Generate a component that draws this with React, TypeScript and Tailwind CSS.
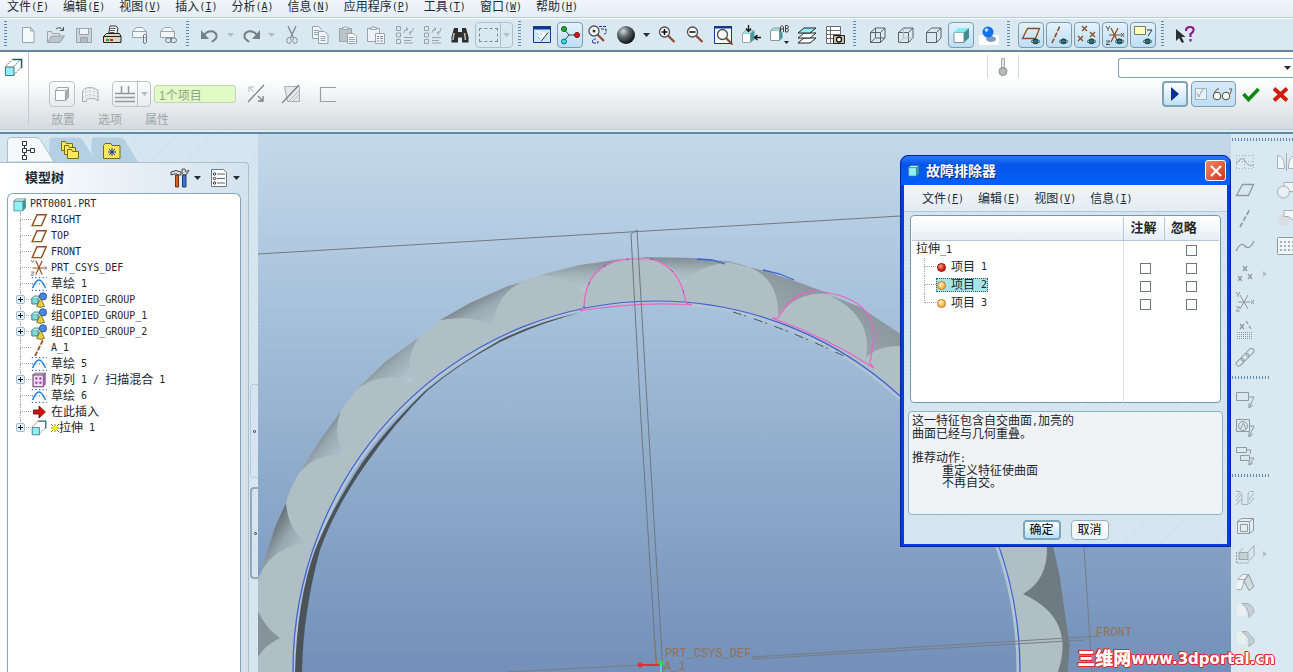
import { useState, type ReactNode } from 'react'

const HATCH =
  'bg-[#d9e7f0] bg-[repeating-linear-gradient(135deg,transparent_0,transparent_2px,rgba(160,195,215,0.16)_2px,rgba(160,195,215,0.16)_3px)]'

const MONO = "font-['DejaVu_Sans_Mono','Noto_Sans_CJK_SC',monospace]"

// CJK glyphs are 12px wide, Latin ones half of that
function Label({ text }: { text: string }) {
  const parts = text.split(/([\x20-\x7e]+)/).filter(Boolean)
  return (
    <>
      {parts.map((part, i) =>
        /^[\x20-\x7e]/.test(part) ? (
          <span key={i} className={`text-[10px] whitespace-pre ${MONO}`}>
            {part}
          </span>
        ) : (
          <span key={i}>{part}</span>
        )
      )}
    </>
  )
}

function Icon({ children, size = 20 }: { children: ReactNode; size?: number }) {
  return (
    <svg width={size} height={size} viewBox="0 0 20 20" fill="none" strokeWidth="1" aria-hidden="true" className="shrink-0">
      {children}
    </svg>
  )
}

function Arrow({ faded = false }: { faded?: boolean }) {
  return (
    <svg width="7" height="4" viewBox="0 0 7 4" aria-hidden="true">
      <path d="M0 0h7L3.5 4z" fill={faded ? '#b3bec5' : '#222c33'} />
    </svg>
  )
}

const G = '#9aa5ab'

const eye = (
  <g>
    <path d="M10 16.500q4.500-5 9 0q-4.500 4.500-9 0z" fill="#e8f4f8" stroke="#3b4448" />
    <circle cx="14.500" cy="16.300" r="2.200" fill="#1c7f7c" stroke="#16373b" />
  </g>
)

const lens = (cx: number, cy: number) => (
  <g>
    <path d={`M${cx + 3} ${cy + 3}l7 7`} stroke="#8c4a2b" strokeWidth="2.200" />
    <circle cx={cx} cy={cy} r="5" fill="#fafcfc" stroke="#4b4f52" strokeWidth="1.300" />
  </g>
)

const cubeBack = (
  <path d="M3.500 7.500h10v10h-10zM3.500 7.500l5-4.500h9.500l-4.500 4.500M18 3v10l-4.500 4.500" stroke="#5d6266" />
)

const clipboard = (
  <>
    <path d="M1.500 3.500h12v13h-12z" fill="#b9c3c8" stroke={G} />
    <path d="M4.500 4.500v-2h2l1-1.500 1 1.500h2v2z" fill="#e8eef2" stroke={G} />
  </>
)

const regen = (
  <path
    d="M2.500 1.500h4v4h-4zM2.500 8h4v4h-4zM2.500 14.500h4v4h-4zM10 8q0-4 4-4l-2-2m2 2l-2 2M19 3q0 5-4 5l2-2m-2 2l2 2M10 12.500h9M10 15.500h7M10 18h9"
    stroke={G}
    fill="none"
  />
)

const icons: Record<string, ReactNode> = {
  new: <path d="M4.500 2.500h8l3.500 3.500v11.500h-11.500zM12.500 2.500v3.500h3.500" fill="#f5f9fb" stroke={G} />,
  open: (
    <>
      <path d="M1.500 17.500v-11h4l1 2h7v3" fill="#dfe6ea" stroke={G} />
      <path d="M1.500 17.500l4-6.500h13l-4.500 6.500z" fill="#bcc5ca" stroke={G} />
      <path d="M10 4q4-3 7 1m.5-3v3.500h-3.500" stroke="#4d565b" />
    </>
  ),
  save: (
    <>
      <path d="M2.500 3.500h15v14h-15z" fill="#cdd5d9" stroke={G} />
      <path d="M5.500 3.500h9v6h-9z" fill="#eef3f6" stroke={G} />
      <path d="M6.500 12.500h7v5h-7z" fill="#b1bbc0" stroke={G} />
    </>
  ),
  print: (
    <>
      <path d="M6.500 10l1.500-9h6l2 2-1.500 7z" fill="#fff" stroke="#333" />
      <path d="M8.500 3.500h5M8 5.500h5M7.500 7.500h5" stroke="#555" />
      <path d="M1.500 11.500l3-3h13l1.500 3v6h-17.500z" fill="#e0d6be" stroke="#222" />
      <path d="M1.500 11.500h17.500" stroke="#222" />
      <path d="M4 14h3v2h-3z" fill="#18a02c" />
      <path d="M8 14h3v2h-3z" fill="#d32020" />
    </>
  ),
  mailclip: (
    <>
      <path d="M2.500 6.500l4-4h6l4 4v6h-14z" fill="#f1f6f8" stroke={G} />
      <path d="M2.500 6.500h14" stroke={G} />
      <path d="M13.500 16v-6q1.500-2 3 0v7q-1.500 3-3 1v-6" stroke="#6f7a80" />
    </>
  ),
  maillink: (
    <>
      <path d="M2.500 6.500l4-4h6l4 4v6h-14z" fill="#f1f6f8" stroke={G} />
      <path d="M2.500 6.500h14" stroke={G} />
      <rect x="7.500" y="13" width="6" height="4.500" rx="2.200" stroke="#6f7a80" />
      <rect x="12.500" y="13" width="6" height="4.500" rx="2.200" stroke="#6f7a80" />
    </>
  ),
  undo: (
    <>
      <path d="M4 10q4-5 9-3.500q5 2 3 7l-4 3.500" stroke="#747f86" strokeWidth="2" />
      <path d="M1 5v9h8z" fill="#747f86" />
    </>
  ),
  redo: (
    <>
      <path d="M16 10q-4-5-9-3.500q-5 2-3 7l4 3.500" stroke="#747f86" strokeWidth="2" />
      <path d="M19 5v9h-8z" fill="#747f86" />
    </>
  ),
  cut: (
    <>
      <path d="M6 1l5.500 12M14 1l-5.500 12" stroke="#87939a" strokeWidth="1.500" />
      <ellipse cx="7" cy="15.500" rx="2.200" ry="3" stroke="#87939a" />
      <ellipse cx="13" cy="15.500" rx="2.200" ry="3" stroke="#87939a" />
    </>
  ),
  copy: (
    <>
      <path d="M2.500 1.500h6l3 3v9h-9zM4 5.500h5M4 7.500h5M4 9.500h5" fill="#eef4f7" stroke={G} />
      <path d="M8.500 6.500h6l3.500 3v9h-9.500zM10.500 11.500h5M10.500 13.500h5M10.500 15.500h5" fill="#eef4f7" stroke={G} />
    </>
  ),
  paste: (
    <>
      {clipboard}
      <path d="M9.500 8.500h6l3 3v7h-9zM11 12.500h5M11 14.500h6M11 16.500h6" fill="#f5f9fb" stroke={G} />
    </>
  ),
  pastespecial: (
    <>
      <path d="M1.500 3.500h12v13h-12z" fill="#edf3f6" stroke={G} />
      <path d="M4.500 4.500v-2h2l1-1.500 1 1.500h2v2z" fill="#e8eef2" stroke={G} />
      <path d="M9.500 8.500h9v10h-9z" fill="#f5f9fb" stroke={G} />
      <path d="M11 11.500h2M14 11.500h3M11 13.500h2M14 13.500h3M11 16h2M14 16h3" stroke="#7d888e" />
    </>
  ),
  regen,
  regenall: regen,
  find: (
    <>
      <path d="M4 3h4v4h4v-4h4l2.500 9v5.500h-6.500v-5h-4v5h-6.500v-5.500z" fill="#2e2e2e" />
      <path d="M4 8l-1 7M14.500 8l1 7" stroke="#b9b9b0" strokeWidth="1.600" />
    </>
  ),
  repaint: (
    <>
      <path d="M1.500 1.500h17v16h-17z" fill="#cfe6f8" stroke="#113a8c" />
      <path d="M1 1h18v3.500h-18z" fill="#113a8c" />
      <path d="M4 6l12 2-7 9z" fill="#f8fcff" />
      <path d="M5 8l3 3M8 8l3 3M6 12l2 2" stroke="#49b0d8" strokeDasharray="1 1" />
      <path d="M16 7.500l-7 9" stroke="#333" />
    </>
  ),
  spin: (
    <>
      <path d="M4 4l5 6M9 10l-5 6M9 10h8" stroke="#38444b" />
      <circle cx="4" cy="4" r="2.500" fill="#1fae2c" stroke="#0b5c14" />
      <circle cx="17" cy="10" r="2.500" fill="#e01818" stroke="#750909" />
      <circle cx="4" cy="16.500" r="2.500" fill="#35dbe0" stroke="#0a7479" />
    </>
  ),
  orient: (
    <>
      {lens(6, 6)}
      <circle cx="6" cy="6" r="1.500" fill="#333" />
      <path d="M11 1.500h7M13 4h5v3M16 9q3 0 2-3M5 18q-2-4 3-4M5 18h5v-3" stroke="#1d2f9c" strokeDasharray="3 1" />
    </>
  ),
  shade: (
    <>
      <defs>
        <radialGradient id="sphere" cx="35%" cy="30%" r="70%">
          <stop offset="0" stopColor="#d9dde0" />
          <stop offset="0.4" stopColor="#6b7277" />
          <stop offset="1" stopColor="#0f1214" />
        </radialGradient>
      </defs>
      <circle cx="10" cy="10" r="9" fill="url(#sphere)" />
    </>
  ),
  zoomin: (
    <>
      {lens(7.500, 7)}
      <path d="M4.500 7h6M7.500 4v6" stroke="#111" strokeWidth="1.600" />
    </>
  ),
  zoomout: (
    <>
      {lens(7.500, 7)}
      <path d="M4.500 7h6" stroke="#111" strokeWidth="1.600" />
    </>
  ),
  refit: (
    <>
      <path d="M1.500 1.500h17v17h-17z" fill="#f4fafd" stroke="#113a8c" />
      <path d="M1 1h18v2.500h-18z" fill="#113a8c" />
      {lens(9.500, 9.500)}
    </>
  ),
  view: (
    <>
      <path d="M1.500 8.500h8v9h-8z" fill="#fff" stroke="#9aa5ab" />
      <path d="M1.500 8.500l3-3h8l-3 3" fill="#9deaf0" stroke="#9aa5ab" />
      <path d="M9.500 8.500l4-3v9l-4 3z" fill="#4b9c9c" />
      <path d="M7.500 0v6m-2.500-2.500l2.500 3 2.500-3M20 12.500h-6m2.500-2.500l-3 2.500 3 2.500" stroke="#111" strokeWidth="1.300" />
    </>
  ),
  saved: (
    <>
      <path d="M1.500 5.500h9v10h-9z" fill="#fff" stroke="#8a959b" />
      <path d="M1.500 5.500l3-2.500h6v2.500" fill="#9deaf0" stroke="#8a959b" />
      <path d="M10.500 6l3 1v6l-3 2.500z" fill="#4b9c9c" />
      <path d="M11.500 7v-5l1.500-1.500 1.500 1.500v5m-3-3h3M16.500 7v-6.500h2l1 1.500-1 1.500h-2m2 0l1 1.500-1 2h-2" stroke="#444" />
      <path d="M15 16h5l-2.500 3z" fill="#222" />
    </>
  ),
  layers: (
    <>
      <path d="M1 18l6-5h12l-6 5z" fill="#fff" stroke="#222" />
      <path d="M1 13l6-5h12l-6 5z" fill="#fff" stroke="#222" />
      <path d="M1 8l6-5h12l-6 5z" fill="#8ff0f5" stroke="#222" />
    </>
  ),
  viewmgr: (
    <>
      <path d="M1.500 1.500h14v17h-14zM5.500 1.500v17M1.500 5.500h14M1.500 9.500h14M1.500 13.500h14" fill="#fff" stroke="#6c6c6c" />
      <path d="M8.500 10.500h11v8h-11z" fill="#c7c0a6" stroke="#222" />
      <circle cx="14" cy="14.500" r="2.500" fill="#fff" stroke="#111" strokeWidth="1.300" />
    </>
  ),
  wire: (
    <>
      {cubeBack}
      <path d="M8.500 3v10h9.500M8.500 13l-5 4.500" stroke="#5d6266" />
    </>
  ),
  hidden: (
    <>
      {cubeBack}
      <path d="M8.500 3v10h9.500M8.500 13l-5 4.500" stroke="#b3bbc0" />
    </>
  ),
  nohidden: cubeBack,
  shaded: (
    <>
      <path d="M3 7.500h10v10h-10z" fill="#fff" stroke="#7d8b92" />
      <path d="M3 7.500l4-4.500h11l-5 4.500z" fill="#7eeef4" />
      <path d="M13 7.500l5-4.500v10l-5 4.500z" fill="#3f8f92" />
    </>
  ),
  realtime: (
    <>
      <path d="M0 10h20v10h-20z" fill="#fff" />
      <ellipse cx="12" cy="14" rx="5" ry="3" fill="#7b9bc6" />
      <circle cx="9" cy="7" r="5.500" fill="#1273ee" />
      <circle cx="7.500" cy="5" r="1.800" fill="#bfe0ff" />
    </>
  ),
  dplane: (
    <>
      <path d="M1.500 13.500l5-10h12l-4 10z" stroke="#8b4c24" strokeWidth="1.300" />
      {eye}
    </>
  ),
  daxis: (
    <>
      <path d="M3 18l8-17" stroke="#8b4c24" strokeWidth="1.600" strokeDasharray="5 1.500" />
      {eye}
    </>
  ),
  dpoint: (
    <>
      <path d="M5 1l5 5M10 1l-5 5M13 7l5 5M18 7l-5 5M1 11l5 5M6 11l-5 5" stroke="#8b4c24" strokeWidth="1.300" />
      {eye}
    </>
  ),
  dcsys: (
    <>
      <path d="M4 10h12M6 3l7 14M13 3l-7 14" stroke="#8b4c24" strokeWidth="1.200" />
      <path d="M1 1l2 3 2-3M3 4v2M1 16h4l-4 3.500h4M16 8l3 4M19 8l-3 4" stroke="#555" />
      {eye}
    </>
  ),
  dannot: (
    <>
      <path d="M1.500 1.500h11v8h-11z" fill="#ffffb8" stroke="#777" />
      <path d="M14 5h5l-4 6" stroke="#333" />
      {eye}
    </>
  ),
  help: (
    <>
      <path d="M1 4v12l3-3 3 5 2-1-2.500-5h4z" fill="#2b2f33" />
      <path d="M11 6q0-4 4-4q4 0 3.500 3.500q-.5 2-3 3.500v3M15.500 14v2.500" stroke="#8a1a88" strokeWidth="2.200" />
    </>
  ),
}

const sideIcons: Record<string, ReactNode> = {
  sketch: (
    <>
      <path d="M1 3.500h18M1 9.500h18M1 16.500h18M1.500 3v14M9.500 3v14M18.500 3v14" stroke="#aab4b9" strokeDasharray="1 2" />
      <path d="M1 12q6-9 9-3t9 4" stroke="#9aa5ab" />
    </>
  ),
  plane: <path d="M1.500 15.500l6-11h11l-5 11z" stroke="#8f9a9f" strokeWidth="1.300" />,
  axis: <path d="M5 19l10-18" stroke="#8f9a9f" strokeWidth="1.600" strokeDasharray="5 2" />,
  curve: <path d="M1 15q5-10 9-5t9-5" stroke="#8f9a9f" strokeWidth="1.300" />,
  points: <path d="M8 2l4 5M12 2l-4 5M3 12l4 5M7 12l-4 5M13 10l4 5M17 10l-4 5" stroke="#8f9a9f" strokeWidth="1.300" />,
  csys: <path d="M3 10h12M5 3l8 14M13 3l-8 14M1 0l2 3 2-3M3 3v2M1 15h4l-4 4h4M16 8l3 4M19 8l-3 4" stroke="#8f9a9f" />,
  field: (
    <>
      <path d="M5 4l4 5M9 4l-4 5M11 1l2 3M14 6l2 3" stroke="#8f9a9f" strokeWidth="1.300" />
      <path d="M2 12.500h16M2 14.500h16M2 16.500h16M2 18.500h16" stroke="#8f9a9f" strokeDasharray="1 1" />
    </>
  ),
  chain: (
    <g transform="rotate(-45 10 10)" stroke="#8f9a9f">
      <rect x="-1" y="7" width="9" height="5" rx="2.500" />
      <rect x="6" y="7" width="9" height="5" rx="2.500" />
      <rect x="13" y="7" width="9" height="5" rx="2.500" />
    </g>
  ),
  note: <path d="M1.500 2.500h12v8h-12zM14 7h5l-5 11m0-5v5l4-3" stroke="#8f9a9f" />,
  notesym: (
    <>
      <path d="M1.500 1.500h13v12h-13zM15 8h4l-5 11m0-5v5l4-3" stroke="#8f9a9f" />
      <circle cx="8" cy="8" r="4.500" stroke="#8f9a9f" />
      <path d="M5.500 11l3-6 2.500 6" stroke="#8f9a9f" />
    </>
  ),
  notes: <path d="M1.500 1.500h10v5h-10zM5.500 9.500h9v5h-9zM12 4h4l-1 4M15 12h4l-5 7m0-4v4l4-2" stroke="#8f9a9f" />,
  hole: <path d="M1 3.500h4q2 1 2 4v9h6v-9q0-3 2-4h4M1 9l4-4M1 13l5-6M1 17l5-6M14 12l5-7M14 16l5-6" stroke="#a6b0b5" />,
  shell: (
    <path d="M2.500 5.500h12v12h-12zM2.500 5.500l4-3h12v12l-4 3M14.500 5.500l4-3M5.500 8.500h7v7h-7z" fill="#e6edf0" stroke="#8f9a9f" />
  ),
  rib: (
    <>
      <path d="M4 8.500h9v7h-9z" fill="#c6cfd3" stroke="#9aa5ab" />
      <path d="M4 8.500l4-4M13 8.500l6-7v10l-6 6" stroke="#a6b0b5" />
      <path d="M1.500 8v11h12" stroke="#8f9a9f" strokeDasharray="2 1" />
    </>
  ),
  draft: (
    <>
      <path d="M2.500 7.500l5-5h6l-4 5zM2.500 7.500h7l-3 10h-5" fill="#eef3f5" stroke="#a6b0b5" />
      <path d="M13.500 2.500l5.500 12-5 4-5-9z" fill="#d3dade" stroke="#8f9a9f" />
    </>
  ),
  round: (
    <>
      <path d="M2 4h9v12h-9z" fill="#e9eeef" />
      <path d="M7 3.500h5q7 2 7 9l-5 5q0-9-7-14z" fill="#c8d0d4" stroke="#a6b0b5" />
    </>
  ),
  chamfer: (
    <>
      <path d="M2 4h9v12h-9z" fill="#e9eeef" />
      <path d="M7 3.500h5l7 8v3l-5 4v-8z" fill="#c8d0d4" stroke="#a6b0b5" />
    </>
  ),
  merge: <path d="M4 15l6-4h9v6h-10z" stroke="#8f9a9f" />,
  mirror: <path d="M1.500 3.500q7 0 7 13h-7zM10.500 1v18M19.500 3.500q-7 0-7 13h7z" fill="#f3f7f9" stroke="#a6b0b5" />,
  union: (
    <>
      <path d="M8 2.500h12v9h-12z" fill="#eef3f5" stroke="#a6b0b5" />
      <circle cx="7.500" cy="12" r="6" fill="#e9eff2" stroke="#a6b0b5" />
    </>
  ),
  trim: (
    <>
      <circle cx="7.500" cy="12" r="6" fill="#d9dee2" />
      <path d="M8 2.500h12v12l-8-6h-4z" fill="#f4f8fa" stroke="#a6b0b5" />
    </>
  ),
  pattern: (
    <>
      <rect x="1.500" y="1.500" width="20" height="17" rx="1" fill="#f0f5f7" stroke="#8f9a9f" />
      <path d="M4 6h15M4 10h15M4 14h15" stroke="#a6b0b5" strokeWidth="2" strokeDasharray="2 2" />
    </>
  ),
}

type Tool = { id: string; label: string; on?: boolean }

const fileTools: Tool[] = [
  { id: 'new', label: '新建' },
  { id: 'open', label: '打开' },
  { id: 'save', label: '保存' },
  { id: 'print', label: '打印' },
  { id: 'mailclip', label: '发送附件' },
  { id: 'maillink', label: '发送链接' },
]
const editTools: Tool[] = [
  { id: 'cut', label: '剪切' },
  { id: 'copy', label: '复制' },
  { id: 'paste', label: '粘贴' },
  { id: 'pastespecial', label: '选择性粘贴' },
  { id: 'regen', label: '再生' },
  { id: 'regenall', label: '再生管理器' },
  { id: 'find', label: '查找' },
]
const viewTools: Tool[] = [
  { id: 'repaint', label: '重画' },
  { id: 'spin', label: '旋转中心', on: true },
  { id: 'orient', label: '定向模式' },
  { id: 'shade', label: '外观库' },
]
const zoomTools: Tool[] = [
  { id: 'zoomin', label: '放大' },
  { id: 'zoomout', label: '缩小' },
  { id: 'refit', label: '重新调整' },
  { id: 'view', label: '重定向' },
  { id: 'saved', label: '已命名视图' },
  { id: 'layers', label: '层' },
  { id: 'viewmgr', label: '视图管理器' },
]
const displayTools: Tool[] = [
  { id: 'wire', label: '线框' },
  { id: 'hidden', label: '隐藏线' },
  { id: 'nohidden', label: '无隐藏线' },
  { id: 'shaded', label: '着色', on: true },
  { id: 'realtime', label: '增强的真实感' },
]
const datumTools: Tool[] = [
  { id: 'dplane', label: '平面显示', on: true },
  { id: 'daxis', label: '轴显示', on: true },
  { id: 'dpoint', label: '点显示', on: true },
  { id: 'dcsys', label: '坐标系显示', on: true },
  { id: 'dannot', label: '注释显示', on: true },
]

function ToolGroup({ tools }: { tools: Tool[] }) {
  return (
    <>
      {tools.map((t) => (
        <button
          key={t.id}
          aria-label={t.label}
          className={
            t.on
              ? 'w-[26px] h-[26px] mx-px shrink-0 flex items-center justify-center rounded-sm border border-[#7f9cae] bg-gradient-to-b from-[#e4f2fb] to-[#bcdff6]'
              : 'w-[26px] h-[26px] mx-px shrink-0 flex items-center justify-center'
          }
        >
          <Icon>{icons[t.id]}</Icon>
        </button>
      ))}
    </>
  )
}

function Grip() {
  return (
    <span className="w-[3px] h-[27px] ml-1 mr-[7px] shrink-0 bg-[repeating-linear-gradient(180deg,#5c8ab0_0,#5c8ab0_1px,transparent_1px,transparent_3px)]" />
  )
}

function Drop({ faded = false, label }: { faded?: boolean; label: string }) {
  return (
    <button aria-label={label} className="w-[13px] h-[26px] shrink-0 flex items-center justify-center">
      <Arrow faded={faded} />
    </button>
  )
}

function MenuItem({ text, hotkey }: { text: string; hotkey: string }) {
  return (
    <button className="flex items-center text-xs leading-[14px] text-[#1c2a33] whitespace-nowrap">
      {text}
      <span className={`text-[10px] ${MONO}`}>
        (<span className="underline">{hotkey}</span>)
      </span>
    </button>
  )
}

const mainMenu = [
  ['文件', 'F'],
  ['编辑', 'E'],
  ['视图', 'V'],
  ['插入', 'I'],
  ['分析', 'A'],
  ['信息', 'N'],
  ['应用程序', 'P'],
  ['工具', 'T'],
  ['窗口', 'W'],
  ['帮助', 'H'],
]

function Toolbar() {
  return (
    <div className="h-[34px] flex items-center border-t border-white border-b-2 border-b-[#5f8aa2] bg-[#dae8f1] overflow-hidden">
      <Grip />
      <ToolGroup tools={fileTools} />
      <Grip />
      <ToolGroup tools={[{ id: 'undo', label: '撤消' }]} />
      <Drop faded label="撤消列表" />
      <ToolGroup tools={[{ id: 'redo', label: '重做' }]} />
      <Drop faded label="重做列表" />
      <ToolGroup tools={editTools} />
      <div className="w-[38px] h-[26px] mx-px shrink-0 flex rounded-sm border border-[#b2c0c9]">
        <button aria-label="选择" className="flex-1 flex items-center justify-center border-r border-[#b2c0c9]">
          <span className="w-[19px] h-[14px] border border-dashed border-[#7c8a92]" />
        </button>
        <button aria-label="选择列表" className="w-[11px] flex items-center justify-center">
          <Arrow faded />
        </button>
      </div>
      <Grip />
      <ToolGroup tools={viewTools} />
      <Drop label="外观列表" />
      <ToolGroup tools={zoomTools} />
      <Grip />
      <ToolGroup tools={displayTools} />
      <Grip />
      <ToolGroup tools={datumTools} />
      <Grip />
      <ToolGroup tools={[{ id: 'help', label: '上下文帮助' }]} />
    </div>
  )
}

function ExtrudeIcon({ size = 18 }: { size?: number }) {
  return (
    <Icon size={size}>
      <path d="M1.500 9l7-7.500M10 18l8-8M10 9l8-7.500" stroke="#555" strokeDasharray="2 1" />
      <path d="M9 1.500h9.500v9" stroke="#1c5f5f" strokeWidth="1.600" />
      <path d="M1.500 9.500h9v9h-9z" fill="#8df1f5" stroke="#3b6a78" />
    </Icon>
  )
}

function Dashboard() {
  const tools = (
    <div className="flex items-center h-[26px]">
      <button
        aria-label="实体"
        className="w-[26px] h-[26px] flex items-center justify-center rounded-sm border border-[#bcc3c6]"
      >
        <Icon>
          <path d="M3.500 6.500h10v10h-10z" fill="#fdfdfd" stroke="#9ea5a8" />
          <path d="M3.500 6.500l2-3h11v10l-3 3" stroke="#9ea5a8" />
          <path d="M14 6.500l2-2v9l-2 2.500z" fill="#a7adb0" />
        </Icon>
      </button>
      <button aria-label="曲面" className="w-[30px] flex items-center justify-center">
        <Icon>
          <path d="M2.500 17.500v-9q1-5 7-5t8.500 3v10.500q-2-3-7.500-2.500t-4 3z" stroke="#a3aaad" />
          <path d="M6 5v10M10 4v10M14 5v10M3 9q7-4 15 0M3 13q7-4 15 0" stroke="#b9bfc2" strokeDasharray="1 1" />
        </Icon>
      </button>
      <div className="w-[39px] h-[26px] ml-[7px] flex rounded-sm border border-[#bcc3c6]">
        <button aria-label="深度" className="flex-1 flex items-center justify-center border-r border-[#bcc3c6]">
          <Icon>
            <path d="M0 9.500h20M0 13.500h20M0 17.500h20M6.500 2v7.500M13.500 2v7.500" stroke="#92999d" strokeWidth="1.500" />
          </Icon>
        </button>
        <button aria-label="深度列表" className="w-3 flex items-center justify-center">
          <Arrow faded />
        </button>
      </div>
      <input
        aria-label="参照"
        defaultValue="1个项目"
        className="w-[82px] h-[18px] ml-[3px] px-1 rounded-[3px] border border-[#c6d3bb] bg-[#e0fbc4] text-xs text-[#94a08a]"
      />
      <button aria-label="反向" className="ml-[10px]">
        <Icon>
          <path d="M2 18l16-17" stroke="#7d8487" strokeWidth="1.300" />
          <path d="M3 8v-5h5M3 3l5 5" stroke="#b0b7ba" />
          <path d="M17 12v5h-5M17 17l-5-5" stroke="#7d8487" strokeWidth="1.400" />
        </Icon>
      </button>
      <button aria-label="去除材料" className="ml-[15px]">
        <Icon>
          <path d="M3.500 2.500h15v15h-12z" fill="#e3e8ea" stroke="#a8afb2" />
          <path d="M8 17l10-10M12 17l6-6M8 12l8-9" stroke="#b3babd" />
          <path d="M1 19l17-18" stroke="#7d8487" strokeWidth="1.300" />
        </Icon>
      </button>
      <button aria-label="加厚草绘" className="ml-[17px]">
        <Icon>
          <path d="M18 3.500h-15.500v14h15.500" stroke="#979ea1" strokeWidth="1.200" />
        </Icon>
      </button>
    </div>
  )

  return (
    <section className="h-[82px] flex flex-col border-b-2 border-[#5f8aa2]">
      <div className="flex-1 flex justify-between bg-gradient-to-b from-white from-35% to-[#d4dbde]">
        <div className="flex">
          <div className="w-[29px] pl-1 pt-[6px] mb-1 border-r border-[#c3ccd1]">
            <ExtrudeIcon size={19} />
          </div>
          <div className="pl-5 pt-[29px]">
            {tools}
            <div className="flex gap-[23px] pt-[5px] pl-[2px] text-xs leading-[16px] text-[#9fa7ab]">
              <button>放置</button>
              <button>选项</button>
              <button>属性</button>
            </div>
          </div>
        </div>
        <div className="flex flex-col items-end">
          <div className="flex items-start pt-[3px]">
            <div className="w-8 h-[23px] mr-[99px] flex items-center justify-center border-x border-[#d5dadc]">
              <Icon>
                <path d="M8.500 1.500h3v10h-3z" fill="#e2e2e2" stroke="#a9adaf" />
                <circle cx="10" cy="14.500" r="4" fill="#b9b9b9" stroke="#8a8d8f" />
              </Icon>
            </div>
            <div className="relative mt-[3px]">
              <select
                aria-label="选择过滤器"
                className="appearance-none block w-[175px] h-5 rounded-l-[3px] border border-r-0 border-[#7fa3b6] bg-white text-xs"
              >
                <option value=""></option>
              </select>
              <span className="pointer-events-none absolute inset-y-0 right-[2px] flex items-center">
                <Arrow />
              </span>
            </div>
          </div>
          <div className="flex items-center pt-[3px] pr-1">
            <button
              aria-label="继续"
              className="w-[26px] h-[26px] flex items-center justify-center rounded-sm border-2 border-[#7fa3b6] bg-gradient-to-b from-white to-[#bfe0f6]"
            >
              <svg width="9" height="14" viewBox="0 0 9 14" aria-hidden="true">
                <path d="M0 0l8 7-8 7z" fill="#0c2f94" />
              </svg>
            </button>
            <label className="w-[45px] h-[26px] ml-[3px] flex items-center justify-center gap-[5px] rounded-sm border border-[#7f9cae] bg-gradient-to-b from-[#d5e9f7] to-[#bddff6]">
              <input
                type="checkbox"
                aria-label="预览"
                defaultChecked
                className="appearance-none w-3 h-3 border border-[#a3b2bb] bg-[#eaf2f8] relative checked:after:content-['✓'] after:absolute after:left-px after:-top-[3px] after:text-[11px] after:leading-[14px] after:text-[#8a979f]"
              />
              <svg width="21" height="14" viewBox="0 0 21 14" fill="none" aria-hidden="true">
                <circle cx="5" cy="9" r="3.800" fill="#fbfbf2" stroke="#4b4b45" />
                <circle cx="14" cy="9" r="3.800" fill="#fbfbf2" stroke="#4b4b45" />
                <path d="M2 6l3-4h2M18 7l2-5h-3" stroke="#7a5446" />
              </svg>
            </label>
            <button aria-label="应用" className="ml-[6px]">
              <svg width="18" height="16" viewBox="0 0 18 16" fill="none" aria-hidden="true">
                <path d="M1.500 8l5 5.500L16.500 3" stroke="#0d8a12" strokeWidth="3.600" />
              </svg>
            </button>
            <button aria-label="取消特征" className="ml-3">
              <svg width="17" height="15" viewBox="0 0 17 15" fill="none" aria-hidden="true">
                <path d="M2 1.500l13 12M15 1.500l-13 12" stroke="#d01d0d" strokeWidth="3.800" />
              </svg>
            </button>
          </div>
        </div>
      </div>
      <div className="h-[3px] border-t border-[#bccbd4] bg-[#e3eef4]" />
    </section>
  )
}

const treeIcons: Record<string, ReactNode> = {
  part: (
    <>
      <path d="M2.500 5.500h12v13h-12z" fill="#8ff1f4" stroke="#4b7f8c" />
      <path d="M14.500 5.500l4-3v12l-4 4z" fill="#3f9296" />
      <path d="M2.500 5.500l3-3h13l-4 3z" fill="#cdfafb" stroke="#4b7f8c" />
    </>
  ),
  plane: <path d="M1.500 17l6-13.500h11.500l-6 13.500z" stroke="#94511f" strokeWidth="1.800" />,
  csys: (
    <>
      <path d="M2 10h15M6 1l8 17M14 1l-8 17" stroke="#94511f" strokeWidth="1.500" />
      <path d="M0 0l2 3 2-3M0 15h4l-4 4h4M17 8l3 4M20 8l-3 4" stroke="#666" />
    </>
  ),
  sketch: (
    <>
      <path d="M1 2h19M1 10h19M1 18h19" stroke="#3b62b8" strokeWidth="1.500" strokeDasharray="1.500 3" />
      <path d="M2 15q8-20 16 0" stroke="#2a7fe0" strokeWidth="2" />
    </>
  ),
  group: (
    <>
      <path d="M1 8h8v7h-8z" fill="#7fd9d6" stroke="#2f6264" />
      <path d="M1 8l3-3h7l-2 3" fill="#b9f4f1" stroke="#2f6264" />
      <circle cx="15" cy="5.500" r="4.500" fill="#4b86e6" stroke="#1e4394" />
      <path d="M12 8l5 10q-5 2.500-10 0z" fill="#e2cf47" stroke="#6d6214" />
    </>
  ),
  axis: <path d="M5 20l10-20" stroke="#94511f" strokeWidth="2.200" strokeDasharray="6 2" />,
  pattern: (
    <>
      <path d="M2.500 3.500h13v15h-13z" fill="#f3ddf5" stroke="#5d3d63" strokeWidth="1.300" />
      <path d="M15.500 3.500l3-2v14l-3 3z" fill="#a565b3" />
      <path d="M2.500 3.500l3-2h13l-3 2z" fill="#fff" stroke="#5d3d63" />
      <path d="M5.500 8h8M5.500 13.500h8" stroke="#81308f" strokeWidth="2.500" strokeDasharray="2.500 2.500" />
    </>
  ),
  insert: <path d="M3 7.500h7v-5l8 7.500-8 7.500v-5h-7z" fill="#d3120c" stroke="#5b0605" />,
  extrude: (
    <>
      <path d="M1.500 9l7-7.500M10 18l8-8" stroke="#555" strokeDasharray="2 1" />
      <path d="M9 1.500h9.500v9" stroke="#266" strokeWidth="1.600" />
      <path d="M1.500 9.500h9v9h-9z" fill="#8df1f5" stroke="#3b6a78" />
    </>
  ),
}

type Node = { icon: string; text: string; expandable?: boolean; flagged?: boolean }

const modelTree: Node[] = [
  { icon: 'plane', text: 'RIGHT' },
  { icon: 'plane', text: 'TOP' },
  { icon: 'plane', text: 'FRONT' },
  { icon: 'csys', text: 'PRT_CSYS_DEF' },
  { icon: 'sketch', text: '草绘 1' },
  { icon: 'group', text: '组COPIED_GROUP', expandable: true },
  { icon: 'group', text: '组COPIED_GROUP_1', expandable: true },
  { icon: 'group', text: '组COPIED_GROUP_2', expandable: true },
  { icon: 'axis', text: 'A_1' },
  { icon: 'sketch', text: '草绘 5' },
  { icon: 'pattern', text: '阵列 1 / 扫描混合 1', expandable: true },
  { icon: 'sketch', text: '草绘 6' },
  { icon: 'insert', text: '在此插入' },
  { icon: 'extrude', text: '拉伸 1', expandable: true, flagged: true },
]

function TreeRow({ node }: { node: Node }) {
  return (
    <li className="group flex h-4 items-center">
      <span className="relative w-[11px] h-4 flex flex-col">
        <span className="h-2 border-l border-b border-dotted border-[#a4a9ac]" />
        <span className="h-2 border-l border-dotted border-[#a4a9ac] group-last:border-transparent" />
        {node.expandable && (
          <button
            aria-label={`展开 ${node.text}`}
            className="absolute -left-1 top-[3px] w-[9px] h-[9px] flex items-center justify-center rounded-[2px] border border-[#9dbccd] bg-[#e5f2f9]"
          >
            <svg width="5" height="5" viewBox="0 0 5 5" aria-hidden="true">
              <path d="M2 0h1v2h2v1h-2v2h-1v-2h-2v-1h2z" fill="#111" />
            </svg>
          </button>
        )}
      </span>
      <Icon size={16}>{treeIcons[node.icon]}</Icon>
      <span className="pl-[4px] flex items-center whitespace-nowrap">
        {node.flagged && (
          <svg width="8" height="8" viewBox="0 0 8 8" aria-hidden="true">
            <path d="M0 0l8 8M8 0l-8 8M4 0v8M0 4h8" stroke="#8a8200" />
            <circle cx="4" cy="4" r="2.500" fill="#f7ee19" />
          </svg>
        )}
        <Label text={node.text} />
      </span>
    </li>
  )
}

function TabShape({ active = false }: { active?: boolean }) {
  return (
    <svg width="48" height="25" viewBox="0 0 48 25" aria-hidden="true" className="absolute left-0 top-0">
      <path
        d="M0.500 25v-21q0-3.500 3.500-3.500h24q4 0 6 3l13 21.500z"
        fill={active ? '#f6f9fb' : '#b4d0e2'}
        stroke={active ? '#a9bfcc' : 'none'}
      />
    </svg>
  )
}

const folder = (x: number, y: number) => (
  <path d={`M${x} ${y}h4l1 2h6v7h-11z`} fill="#f7e95c" stroke="#7c6a12" />
)

function Sidebar() {
  return (
    <aside className={`w-[258px] shrink-0 flex ${HATCH}`}>
      <div className="w-[249px] flex flex-col">
        <div className="flex pl-[7px] pt-[3px] h-7" role="tablist">
          <button role="tab" aria-selected="true" aria-label="模型树" className="relative z-10 w-[42px]">
            <TabShape active />
            <svg width="15" height="20" viewBox="0 0 15 20" fill="none" className="absolute left-[14px] top-[3px]" aria-hidden="true">
              <path d="M1.500 1.500h4v4h-4zM1.500 8.500h4v4h-4zM1.500 15.500h4v4h-4zM9.500 8.500h4v4h-4z" fill="#fff" stroke="#333" />
              <path d="M3.500 5.500v3M3.500 12.500v3M5.500 10.500h4" stroke="#333" />
            </svg>
          </button>
          <button role="tab" aria-selected="false" aria-label="文件夹浏览器" className="relative w-[42px]">
            <TabShape />
            <svg width="20" height="20" viewBox="0 0 20 20" className="absolute left-[11px] top-[3px]" aria-hidden="true">
              {folder(1.500, 1.500)}
              {folder(4.500, 5.500)}
              {folder(7.500, 9.500)}
            </svg>
          </button>
          <button role="tab" aria-selected="false" aria-label="收藏夹" className="relative w-[42px]">
            <TabShape />
            <svg width="18" height="16" viewBox="0 0 18 16" fill="none" className="absolute left-[12px] top-[6px]" aria-hidden="true">
              <path d="M0.500 15.500v-13l1.500-2h6l1 2h8v13z" fill="#f7e95c" stroke="#7c6a12" />
              <path d="M9 5v8M5 9h8M6 6l6 6M12 6l-6 6" stroke="#1c2ea0" />
            </svg>
          </button>
        </div>
        <div className="flex-1 flex flex-col rounded-tr border-t border-r border-[#a9bfcc] bg-gradient-to-r from-white to-[#d3e2ed]">
          <div className="h-[30px] flex items-center pl-[25px]">
            <h2 className="text-[13px] leading-4 font-bold text-[#1c2a33] w-[145px]">模型树</h2>
            <button aria-label="设置" className="flex items-center gap-1">
              <Icon>
                <path d="M1 4q5-3 10 0v3h-3l-1-1h-3l-3 1z" fill="#d5dde1" stroke="#444" />
                <path d="M5.500 7h3v12h-3z" fill="#d2622b" stroke="#6c3215" />
                <path d="M12.500 7h3.500v12h-3.500z" fill="#3f76c9" stroke="#1d3d79" />
                <path d="M12 1v4l2 2 3-1 2-4-3 2-1-3z" fill="#cfd6da" stroke="#555" />
              </Icon>
              <Arrow />
            </button>
            <button aria-label="显示" className="flex items-center gap-1 ml-2">
              <Icon>
                <path d="M2.500 1.500h12l3 3v14h-15z" fill="#fff" stroke="#68798a" />
                <path d="M8 6h8M8 10.500h8M8 15h8" stroke="#56616b" />
                <circle cx="5.500" cy="6" r="1.200" stroke="#333" />
                <circle cx="5.500" cy="10.500" r="1.200" stroke="#333" />
                <circle cx="5.500" cy="15" r="1.200" stroke="#333" />
              </Icon>
              <Arrow />
            </button>
          </div>
          <div className="flex-1 ml-[7px] mr-[7px] pt-[2px] rounded-t-md border border-b-0 border-[#7fa6bd] bg-white text-xs leading-4 text-[#1d262c]">
            <div className="h-4 pl-1 flex items-center gap-[3px]">
              <Icon size={15}>{treeIcons.part}</Icon>
              <Label text="PRT0001.PRT" />
            </div>
            <ul className="pl-3">
              {modelTree.map((n) => (
                <TreeRow key={n.text} node={n} />
              ))}
            </ul>
          </div>
        </div>
      </div>
      <div className="flex-1 flex flex-col gap-[9px] pt-[250px]">
        <button
          aria-label="展开面板"
          className="h-[94px] ml-px flex items-center justify-center rounded-l border border-r-0 border-[#b3cddd]"
        >
          <span className="w-[3px] h-[3px] rounded-full border border-[#20303a]" />
        </button>
        <button
          aria-label="折叠面板"
          className="h-[92px] ml-px flex items-center justify-center rounded-l border-2 border-r-0 border-[#95a9b6]"
        >
          <span className="w-[3px] h-[3px] rounded-full border border-[#20303a]" />
        </button>
      </div>
    </aside>
  )
}

function ModelView() {
  return (
    <svg
      viewBox="258 134 973 538"
      preserveAspectRatio="xMinYMin slice"
      className="absolute inset-0 w-full h-full"
      fill="none"
      role="img"
      aria-label="三维模型"
    >
      <defs>
        <linearGradient id="sky" x1="0" y1="0" x2="0" y2="1">
          <stop offset="0" stopColor="#c4d9ea" />
          <stop offset="0.3" stopColor="#a9c3dc" />
          <stop offset="1" stopColor="#7290b9" />
        </linearGradient>
        <linearGradient id="facet" x1="0.3" y1="0.3" x2="0.9" y2="0.9">
          <stop offset="0" stopColor="#66727a" />
          <stop offset="0.4" stopColor="#9aa8b1" />
          <stop offset="1" stopColor="#bac9d4" />
        </linearGradient>
        <linearGradient id="facetTop" x1="0" y1="0" x2="0" y2="1">
          <stop offset="0" stopColor="#808d96" />
          <stop offset="0.5" stopColor="#a6b4bc" />
          <stop offset="1" stopColor="#b9c8d2" />
        </linearGradient>
        <linearGradient id="facetRight" x1="1" y1="0" x2="0" y2="1">
          <stop offset="0" stopColor="#7d8a91" />
          <stop offset="1" stopColor="#a3b0b7" />
        </linearGradient>
      </defs>
      <rect x="258" y="134" width="973" height="538" fill="url(#sky)" />
      <path d="M258 254L900 216" stroke="#75797d" />

      {/* ring body */}
      <path
        d="M258 672V578L261 573L275 527L286 503Q289 489 300 472L320 440L340 412Q346 402 359 388L385 362L418 338L440 320L470 303L508 286L540 275L580 265L615 259L640 257L692 258L735 262L765 271L795 281L830 294L860 307L905 337Q990 410 1030 490L1053 548L1060 577L1066 620L1070 645L1068 672H1020A363.500 369 0 1 0 293 672z"
        fill="#b0bec5"
      />
      <path d="M440 320L470 303L508 286L523 282Q496 292 493 328Q478 314 440 320z" fill="url(#facet)" />
      <path d="M358 388L385 362L418 338Q404 362 413 383Q385 370 358 388z" fill="url(#facet)" />
      <path d="M300 472L320 440L341 411Q331 436 347 456Q319 451 300 472z" fill="url(#facet)" />
      <path d="M260 574L275 527L286 503Q288 528 305 543Q274 547 260 574z" fill="url(#facet)" />
      <path d="M258 611Q266 629 280 638Q266 644 258 657z" fill="#87939a" />
      <path d="M540 275L580 265L623 259Q592 268 585 293Q570 277 540 275z" fill="url(#facetTop)" />
      <path d="M640 257L692 258L735 262Q696 264 685 285Q674 261 640 257z" fill="url(#facetTop)" />
      <path d="M727 262L765 271L795 281L830 294Q798 290 778 316Q780 268 727 262z" fill="url(#facetRight)" />
      <path d="M817 290L860 307L905 337V347Q884 343 866 357Q874 311 817 290z" fill="url(#facetRight)" />
      <path d="M1047 546L1053 546L1060 577L1066 620L1070 645L1068 672H1058Q1076 618 1023 594Q1048 580 1047 546z" fill="#6f7b82" />

      {/* inner rim */}
      <ellipse cx="656.500" cy="670" rx="361.500" ry="367" stroke="#b3c5d4" strokeWidth="3" />
      <path
        d="M582 312Q536 322 500 340Q455 366 425 391Q386 429 362 463Q331 510 315 550Q297 600 295 672H302Q303 612 320 550Q335 508 366 464Q393 425 427 391Q457 365 500 342Q540 323 582 312z"
        fill="#4b5358"
      />
      <path d="M733 312Q785 328 846 357" stroke="#4b5358" strokeDasharray="9 3 2 8" />
      <ellipse cx="656.500" cy="670" rx="363.500" ry="369" stroke="#3c62d6" strokeWidth="1.200" />
      <path d="M697 259L712 260L725 264M763 270L780 274L794 280" stroke="#3c62d6" strokeWidth="1.300" />

      {/* highlighted surfaces */}
      <path
        d="M580 311L584 308Q585 262 630 259H650Q680 265 686 303L692 305Q640 301 580 311zM772 318H778Q795 290 817 291Q880 298 873 345L870 363L874 368Q826 337 772 318z"
        stroke="#ee62c4"
        strokeWidth="1.200"
      />
      <path d="M584 308Q585 262 630 259H650Q680 265 686 303" stroke="#4a49c0" strokeDasharray="2 22" />

      <path d="M656 662L641 420L631 234L637 230L648 420L663 672" stroke="#6f777d" />
      <path d="M508 672L660 664M752 657L1100 636M752 659L1085 640M1084 546L1092 672" stroke="#777d84" />
      <path d="M654 637L657 665" stroke="#9b6f4d" />
      <path d="M639 665H660" stroke="#df3038" strokeWidth="2" />
      <circle cx="640" cy="665" r="2.500" fill="#ee2b35" />
      <path d="M661 665v7" stroke="#50e2ec" strokeWidth="1.500" />
      <path d="M659 661h4v4h-4z" fill="#31d943" />
      <g fill="#98714f" fontSize="12" fontFamily="'Liberation Mono', monospace">
        <text x="665" y="657">PRT_CSYS_DEF</text>
        <text x="664" y="670">A_1</text>
        <text x="1096" y="636">FRONT</text>
      </g>
    </svg>
  )
}

type Item = { id: string; text: string; dot: 'red' | 'orange' }

const items: Item[] = [
  { id: 'i1', text: '项目 1', dot: 'red' },
  { id: 'i2', text: '项目 2', dot: 'orange' },
  { id: 'i3', text: '项目 3', dot: 'orange' },
]

function Tick({ label }: { label: string }) {
  return (
    <input
      type="checkbox"
      aria-label={label}
      className="appearance-none block mx-auto mt-[2px] w-[11px] h-[11px] border border-[#6e777c] bg-white checked:bg-[#4f7f9b]"
    />
  )
}

function Troubleshooter() {
  const [selected, setSelected] = useState('i2')

  return (
    <div
      role="dialog"
      aria-label="故障排除器"
      className="absolute right-0 top-[21px] w-[331px] rounded-t-lg bg-[#0a3cdc] border border-[#0720a4] pb-[2px] px-[3px]"
    >
      <div className="-mx-[3px] h-[29px] pl-[6px] pr-1 flex items-center rounded-t-lg bg-gradient-to-b from-[#2c7bff] via-[#0455e8] via-30% to-[#0560fb]">
        <Icon size={13}>{treeIcons.part}</Icon>
        <h2 className="flex-1 pl-[6px] text-sm leading-4 font-bold text-white [text-shadow:1px_1px_0_#0a2a80]">故障排除器</h2>
        <button
          aria-label="关闭"
          className="w-[21px] h-[21px] flex items-center justify-center rounded-[3px] border border-white bg-gradient-to-br from-[#f0866a] to-[#cf3208]"
        >
          <svg width="12" height="12" viewBox="0 0 12 12" aria-hidden="true">
            <path d="M1 1l10 10M11 1L1 11" stroke="#fff" strokeWidth="2" />
          </svg>
        </button>
      </div>

      <div className={HATCH}>
        <div className="flex gap-[14px] h-[27px] pt-px pl-[18px] items-center border-b border-[#b7c9d4] bg-gradient-to-b from-[#f2f6fa] to-[#e3ecf3]">
          <MenuItem text="文件" hotkey="F" />
          <MenuItem text="编辑" hotkey="E" />
          <MenuItem text="视图" hotkey="V" />
          <MenuItem text="信息" hotkey="I" />
        </div>

        <div className="mx-[6px] mt-[3px] h-[188px] p-px rounded border border-[#6f9bb0] bg-white">
          <table className="w-full h-full table-fixed border-collapse text-xs leading-4 text-[#1d262c]">
            <thead>
              <tr className="h-[23px] bg-gradient-to-b from-white to-[#e4eef4]">
                <th className="border-b border-r border-[#b5cad6]"></th>
                <th className="w-[41px] p-0 border-b border-r border-[#b5cad6] text-[13px]">注解</th>
                <th className="w-[55px] p-0 pr-4 border-b border-[#b5cad6] text-[13px]">忽略</th>
              </tr>
            </thead>
            <tbody>
              <tr className="h-[18px]">
                <td className="p-0 pl-1 border-r border-[#d5e2e9]">
                  <Label text="拉伸_1" />
                </td>
                <td className="p-0"></td>
                <td className="p-0">
                  <Tick label="忽略 拉伸_1" />
                </td>
              </tr>
              {items.map((it) => (
                <tr key={it.id} className="h-[18px]">
                  <td className="p-0 pl-3 border-r border-[#d5e2e9]">
                    <div className="flex items-center h-[18px]">
                      <span className="w-3 h-[18px] flex flex-col">
                        <span className="h-[9px] border-l border-b border-dotted border-[#a4a9ac]" />
                        <span
                          className={
                            it.id === 'i3' ? 'h-[9px]' : 'h-[9px] border-l border-dotted border-[#a4a9ac]'
                          }
                        />
                      </span>
                      <button
                        onClick={() => setSelected(it.id)}
                        className={
                          selected === it.id
                            ? 'h-[14px] flex items-center gap-[5px] border border-dotted border-[#2e5a5c] bg-[#a6e4e7]'
                            : 'h-[14px] flex items-center gap-[5px] border border-transparent'
                        }
                      >
                        <span
                          className={
                            it.dot === 'red'
                              ? 'w-[9px] h-[9px] rounded-full border border-[#8c1208] bg-[radial-gradient(circle_at_35%_30%,#ff9d8e,#d3210f_60%)]'
                              : 'w-[9px] h-[9px] rounded-full border border-[#c07a1e] bg-[radial-gradient(circle_at_35%_30%,#fff3c4,#fbb040_70%)]'
                          }
                        />
                        <span className="flex items-center leading-3">
                          <Label text={it.text} />
                        </span>
                      </button>
                    </div>
                  </td>
                  <td className="p-0 pl-1">
                    <Tick label={`注解 ${it.text}`} />
                  </td>
                  <td className="p-0">
                    <Tick label={`忽略 ${it.text}`} />
                  </td>
                </tr>
              ))}
              <tr>
                <td className="border-r border-[#d5e2e9]"></td>
                <td></td>
                <td></td>
              </tr>
            </tbody>
          </table>
        </div>

        <div className="mx-1 mt-2 h-[104px] px-[3px] pt-[3px] rounded-sm border border-[#8fb3c4] bg-[#eff3f5] text-xs leading-[12px] text-[#1d262c]">
          <p>
            这一特征包含自交曲面<span className={`text-[10px] ${MONO}`}>,</span>加亮的
          </p>
          <p>曲面已经与几何重叠。</p>
          <p className="pt-3">
            推荐动作<span className={`text-[10px] ${MONO}`}>:</span>
          </p>
          <p className="pl-[30px]">重定义特征使曲面</p>
          <p className="pl-[30px]">不再自交。</p>
        </div>

        <div className="flex justify-center gap-[10px] pt-[5px] pb-1 text-xs leading-4 text-black">
          <button className="w-[38px] h-5 rounded-sm border-2 border-[#7ba6bb] bg-gradient-to-b from-white to-[#b7dff8]">
            确定
          </button>
          <button className="w-[38px] h-5 rounded-sm border border-[#8fb0c2] bg-gradient-to-b from-white to-[#eaf3f9]">
            取消
          </button>
        </div>
      </div>
    </div>
  )
}

function SideGrip({ wide = false }: { wide?: boolean }) {
  return (
    <div
      className={
        wide
          ? 'h-[3px] mt-1 mb-[7px] ml-px bg-[repeating-linear-gradient(90deg,#5c8ab0_0,#5c8ab0_1px,transparent_1px,transparent_3px)]'
          : 'h-[3px] mt-1 mb-[7px] ml-px w-[39px] bg-[repeating-linear-gradient(90deg,#5c8ab0_0,#5c8ab0_1px,transparent_1px,transparent_3px)]'
      }
    />
  )
}

function SideButtons({ ids }: { ids: string[] }) {
  return (
    <>
      {ids.map((id) => (
        <button key={id} aria-label={id} className="h-7 w-10 shrink-0 flex items-center pl-1 gap-2">
          <Icon>{sideIcons[id]}</Icon>
          {(id === 'points' || id === 'rib') && (
            <svg width="4" height="6" viewBox="0 0 4 6" aria-hidden="true">
              <path d="M0 0l4 3-4 3z" fill="#b4bec4" />
            </svg>
          )}
        </button>
      ))}
    </>
  )
}

function FeatureBar() {
  return (
    <nav aria-label="特征" className="w-[62px] shrink-0 overflow-hidden bg-[#dae8f1]">
      <SideGrip wide />
      <div className="flex gap-[5px] overflow-hidden">
        <div className="w-10 shrink-0 flex flex-col">
          <SideButtons ids={['sketch', 'plane', 'axis', 'curve', 'points', 'csys', 'field', 'chain']} />
          <SideGrip />
          <SideButtons ids={['note', 'notesym', 'notes']} />
          <SideGrip />
          <SideButtons ids={['hole', 'shell', 'rib', 'draft', 'round', 'chamfer']} />
        </div>
        <div className="w-10 shrink-0 flex flex-col -ml-1">
          <SideButtons ids={['mirror', 'union', 'trim', 'pattern']} />
        </div>
      </div>
    </nav>
  )
}

export default function App() {
  return (
    <div className="relative h-screen min-h-[560px] flex flex-col overflow-hidden bg-[#dae8f1] font-['Liberation_Sans','Noto_Sans_CJK_SC',sans-serif] text-xs">
      <nav aria-label="主菜单" className="h-[18px] flex items-start gap-[14px] pl-[7px] bg-gradient-to-b from-[#f0f5fa] to-[#e5eef5] border-b border-[#b7cdd9]">
        {mainMenu.map(([text, hotkey]) => (
          <MenuItem key={text} text={text} hotkey={hotkey} />
        ))}
      </nav>
      <Toolbar />
      <Dashboard />
      <div className="flex-1 min-h-0 flex">
        <Sidebar />
        <main className="relative flex-1 overflow-hidden">
          <ModelView />
          <Troubleshooter />
        </main>
        <FeatureBar />
      </div>
      <p className="absolute right-[18px] bottom-[3px] flex items-center leading-5 font-black text-white [text-shadow:1px_0_0_#e02a2a,-1px_0_0_#e02a2a,0_1px_0_#e02a2a,0_-1px_0_#e02a2a,1px_1px_0_#e02a2a,-1px_-1px_0_#e02a2a]">
        <span className="text-lg leading-5">三维网</span>
        <span className="text-[15px] font-['DejaVu_Sans',sans-serif]">www.3dportal.cn</span>
      </p>
    </div>
  )
}
